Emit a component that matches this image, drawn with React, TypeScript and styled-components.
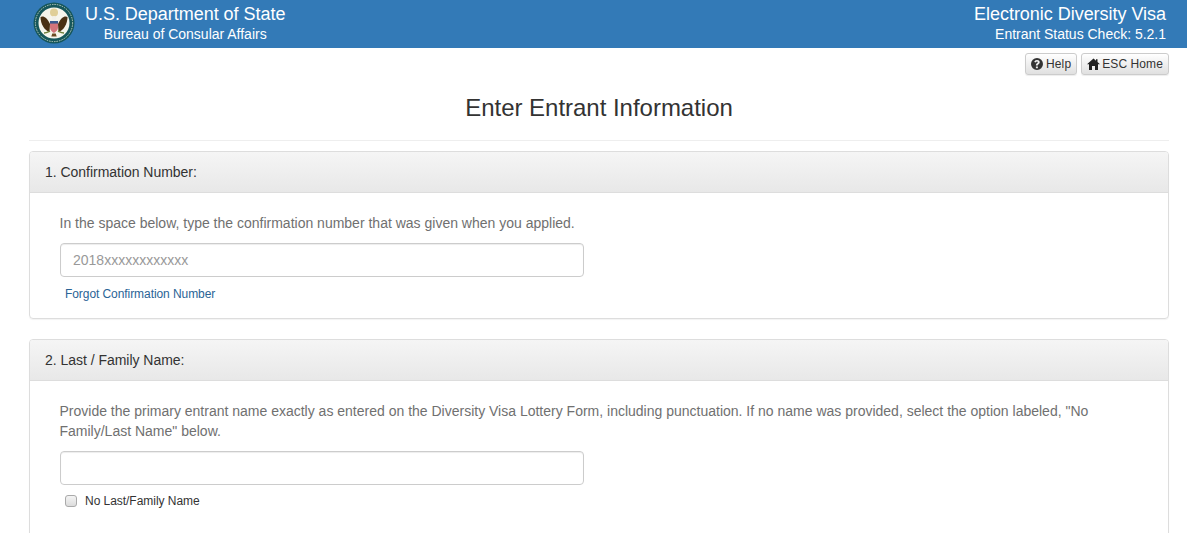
import React from "react";
import styled, { createGlobalStyle } from "styled-components";

const Global = createGlobalStyle`
  html, body { margin: 0; padding: 0; background: #fff; overflow: hidden; height: 533px; }
  body { font-family: "Liberation Sans", Arial, sans-serif; font-size: 14px; color: #333; line-height: 20px; }
  * { box-sizing: border-box; }
`;

const Banner = styled.header`
  height: 48px;
  background: #337ab7;
  color: #fff;
  padding: 0 21px 0 33px;
  display: flex;
  justify-content: space-between;
`;
const Brand = styled.div`
  display: flex;
  gap: 10px;
  padding-top: 2px;
`;
const Titles = styled.div`
  display: flex;
  flex-direction: column;
  align-items: center;
  padding-top: 2px;
`;
const Main = styled.div`
  font-size: 18px;
  line-height: 20px;
  letter-spacing: -0.03px;
`;
const Sub = styled.div`
  font-size: 14px;
  line-height: 18px;
  margin-top: 1px;
  letter-spacing: -0.01px;
`;
const Right = styled.div`
  display: flex;
  flex-direction: column;
  align-items: flex-end;
  padding-top: 4px;
`;
const Page = styled.main`
  height: 485px;
  overflow: hidden;
  padding: 5px 18px 0 29px;
`;
const Tools = styled.div`
  display: flex;
  justify-content: flex-end;
  gap: 4px;
`;
const ToolButton = styled.button<{ $gap: number }>`
  height: 22px;
  padding: 0 5px;
  display: inline-flex;
  align-items: center;
  gap: ${(p) => p.$gap}px;
  font: 12px/18px "Liberation Sans", Arial, sans-serif;
  letter-spacing: 0.1px;
  color: #333;
  border: 1px solid #ccc;
  border-radius: 3px;
  background: linear-gradient(#fff, #e0e0e0);
  box-shadow: inset 0 1px 0 rgba(255,255,255,.15), 0 1px 1px rgba(0,0,0,.075);
`;
const Heading = styled.h1`
  margin: 0;
  height: 55px;
  padding-top: 20px;
  text-align: center;
  font-size: 24px;
  line-height: 26px;
  font-weight: 400;
  color: #333;
  letter-spacing: -0.02px;
`;
const Rule = styled.hr`
  margin: 10px 0 10px;
  border: 0;
  border-top: 1px solid #eee;
`;
const Panel = styled.section`
  border: 1px solid #ddd;
  border-radius: 4px;
  margin-bottom: 20px;
  box-shadow: 0 1px 1px rgba(0,0,0,.05);
  overflow: hidden;
`;
const PanelHead = styled.div`
  height: 41px;
  padding: 10px 15px;
  background: linear-gradient(#f5f5f5, #e8e8e8);
  border-bottom: 1px solid #ddd;
  color: #333;
  letter-spacing: -0.03px;
`;
const PanelBody = styled.div<{ $bottom: number }>`
  padding: 20px 30px ${(p) => p.$bottom}px 29.5px;
  color: #666;
`;
const Help = styled.p`
  margin: 0 0 10px;
  color: #707070;
`;
const Field = styled.input`
  display: block;
  width: 524px;
  height: 34px;
  margin-left: 0.5px;
  padding: 6px 12px;
  border: 1px solid #ccc;
  border-radius: 4px;
  font: 14px/20px "Liberation Sans", Arial, sans-serif;
  color: #555;
  box-shadow: inset 0 1px 1px rgba(0,0,0,.075);
  &::placeholder { color: #999; opacity: 1; }
`;
const SmallLink = styled.a`
  display: block;
  margin: 7px 0 0 5.5px;
  font-size: 12px;
  line-height: 20px;
  letter-spacing: -0.07px;
  color: #2a6496;
  text-decoration: none;
`;
const CheckRow = styled.label`
  display: flex;
  align-items: center;
  gap: 8px;
  margin: 6px 0 0 5.5px;
  font-size: 12px;
  line-height: 20px;
  color: #333;
  letter-spacing: -0.04px;
`;
const Check = styled.span`
  width: 12px;
  height: 12px;
  border: 1px solid #aaa;
  border-radius: 3px;
  background: linear-gradient(#f4f4f4, #dcdcdc);
`;

const Seal = () => (
  <svg width="42" height="42" viewBox="0 0 42 42">
    <circle cx="21" cy="21" r="20.5" fill="#16565a" />
    <circle cx="21" cy="21" r="18.6" fill="none" stroke="#b9cbbd" strokeWidth="1" strokeDasharray="1.500 1" />
    <circle cx="21" cy="21" r="15.500" fill="#f6f5ec" />
    <circle cx="21" cy="10.500" r="4" fill="#e0cf98" />
    <path d="M7.500 15c1.500-1 4-.5 5.500 1 2 2 3 4 4 6l-.5 8c-5-1.500-9-8-9-15z" fill="#4a3114" />
    <path d="M34.500 15c-1.500-1-4-.5-5.500 1-2 2-3 4-4 6l.5 8c5-1.500 9-8 9-15z" fill="#4a3114" />
    <path d="M18.800 17.500c0-2 1-3.500 2.200-3.500s2.500 1 2.500 2.500l-1 1.500z" fill="#f2f1ea" />
    <path d="M17 19h8v6.500c0 3-2.500 4.500-4 5.500-1.500-1-4-2.500-4-5.500z" fill="#d3747b" />
    <path d="M17 19h8v2.600h-8z" fill="#3c5a8e" />
    <path d="M11 31c3 0 4-1 6-2M31 31c-3 0-4-1-6-2" stroke="#6f7f3a" strokeWidth="1.500" fill="none" />
    <path d="M19.300 31.500h3.400l1 3h-5.400z" fill="#6b4a22" />
  </svg>
);

const HelpGlyph = () => (
  <svg width="12" height="12" viewBox="0 0 12 12">
    <path fillRule="evenodd" fill="#333" d="M6 0a6 6 0 1 1 0 12A6 6 0 0 1 6 0zM4.900 8.500v1.700h2V8.500zM6 1.900c-1.500 0-2.500.8-2.700 2.200l1.700.4c.1-.7.400-1 1-1 .5 0 .8.300.8.700 0 .4-.3.700-.8 1.100-.7.500-1.100 1-1.100 1.800v.3h1.900v-.2c0-.4.200-.6.700-1 .7-.5 1.200-1.100 1.200-2 0-1.400-1.100-2.300-2.700-2.300z" />
  </svg>
);

const HomeGlyph = () => (
  <svg width="13" height="12" viewBox="0 0 13 12">
    <path fill="#1f1f1f" d="M6.500.5 0 6.200h2V12h3V8h3v4h3V6.200h2l-2.500-2.200V1.200H9v1.500z" />
  </svg>
);

export default function App() {
  return (
    <>
      <Global />
      <Banner>
        <Brand>
          <Seal />
          <Titles>
            <Main>U.S. Department of State</Main>
            <Sub>Bureau of Consular Affairs</Sub>
          </Titles>
        </Brand>
        <Right>
          <Main>Electronic Diversity Visa</Main>
          <Sub>Entrant Status Check: 5.2.1</Sub>
        </Right>
      </Banner>
      <Page>
        <Tools>
          <ToolButton $gap={3}><HelpGlyph />Help</ToolButton>
          <ToolButton $gap={2}><HomeGlyph />ESC Home</ToolButton>
        </Tools>
        <Heading>Enter Entrant Information</Heading>
        <Rule />
        <Panel>
          <PanelHead>1. Confirmation Number:</PanelHead>
          <PanelBody $bottom={14}>
            <Help>In the space below, type the confirmation number that was given when you applied.</Help>
            <Field placeholder="2018xxxxxxxxxxxx" />
            <SmallLink href="#">Forgot Confirmation Number</SmallLink>
          </PanelBody>
        </Panel>
        <Panel>
          <PanelHead>2. Last / Family Name:</PanelHead>
          <PanelBody $bottom={40}>
            <Help>Provide the primary entrant name exactly as entered on the Diversity Visa Lottery Form, including punctuation. If no name was provided, select the option labeled, "No Family/Last Name" below.</Help>
            <Field />
            <CheckRow><Check />No Last/Family Name</CheckRow>
          </PanelBody>
        </Panel>
      </Page>
    </>
  );
}
